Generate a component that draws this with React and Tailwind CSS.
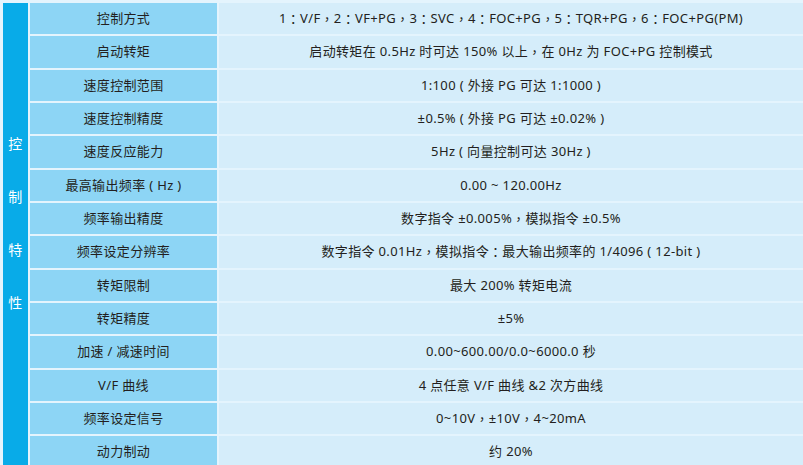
const rows = [
  ["控制方式", "1：V/F，2：VF+PG，3：SVC，4：FOC+PG，5：TQR+PG，6：FOC+PG(PM)"],
  ["启动转矩", "启动转矩在 0.5Hz 时可达 150% 以上，在 0Hz 为 FOC+PG 控制模式"],
  ["速度控制范围", "1:100 ( 外接 PG 可达 1:1000 )"],
  ["速度控制精度", "±0.5% ( 外接 PG 可达 ±0.02% )"],
  ["速度反应能力", "5Hz ( 向量控制可达 30Hz )"],
  ["最高输出频率 ( Hz )", "0.00 ~ 120.00Hz"],
  ["频率输出精度", "数字指令 ±0.005%，模拟指令 ±0.5%"],
  ["频率设定分辨率", "数字指令 0.01Hz，模拟指令：最大输出频率的 1/4096 ( 12-bit )"],
  ["转矩限制", "最大 200% 转矩电流"],
  ["转矩精度", "±5%"],
  ["加速 / 减速时间", "0.00~600.00/0.0~6000.0 秒"],
  ["V/F 曲线", "4 点任意 V/F 曲线 &2 次方曲线"],
  ["频率设定信号", "0~10V，±10V，4~20mA"],
  ["动力制动", "约 20%"],
];

// full-width colon / comma drawn centred, as in the source sheet
function Cell({ text }) {
  return text.split(/([：，])/).map((part, i) =>
    part === "：" || part === "，" ? (
      <span key={i} style={{ fontFamily: '"Noto Sans CJK TC", sans-serif' }}>
        {part}
      </span>
    ) : (
      part
    )
  );
}

export default function App() {
  return (
    <div
      className="w-[803px] h-[465px] overflow-hidden bg-[#e4f4fd] pt-[3px] pl-[3px] flex gap-[2px] text-[13px] tracking-[0.35px] text-[#231f20]"
      style={{ fontFamily: '"Noto Sans", "Noto Sans CJK SC", sans-serif' }}
    >
      <div className="w-[25px] shrink-0 h-[470px] bg-[#08abe8] flex flex-col items-center pt-[132px] gap-[35px] text-white text-[14px] leading-[18px]">
        <span>控</span>
        <span>制</span>
        <span>特</span>
        <span>性</span>
      </div>
      <div className="flex-1 flex flex-col gap-[2px]">
        {rows.map(([label, value]) => (
          <div key={label} className="h-[31.33px] shrink-0 flex gap-[2px]">
            <div className="w-[187px] shrink-0 bg-[#8dd5f5] flex items-center justify-center">
              {label}
            </div>
            <div className="flex-1 bg-[#d5edfa] flex items-center justify-center whitespace-pre">
              <Cell text={value} />
            </div>
          </div>
        ))}
      </div>
    </div>
  );
}
